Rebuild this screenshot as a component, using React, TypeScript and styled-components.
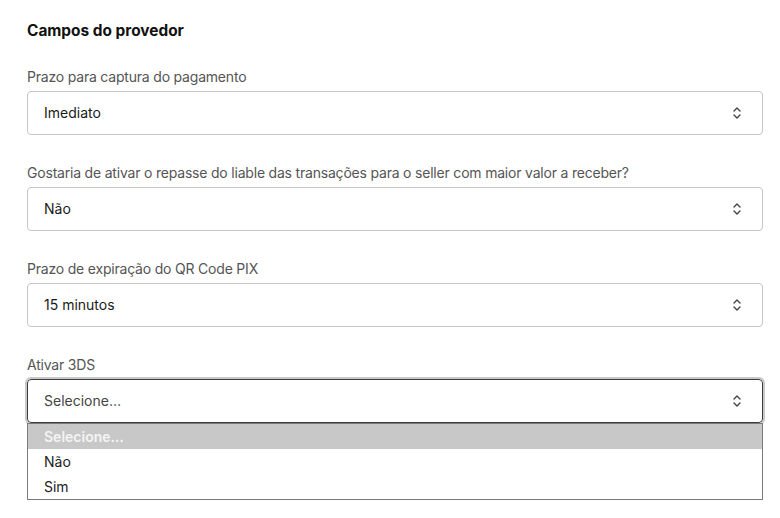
import React from "react";
import styled, { createGlobalStyle } from "styled-components";

const Global = createGlobalStyle`
  html, body { margin: 0; padding: 0; background: #fff; }
  body { font-family: Inter, "Open Sans", "Liberation Sans", sans-serif; }
`;

const Page = styled.div`
  padding: 21px 17px 0 27px;
  display: flex;
  flex-direction: column;
`;

const Heading = styled.h2`
  margin: 0 0 26px;
  font-size: 15.4px;
  line-height: 20px;
  font-weight: 700;
  color: #111;
`;

const Groups = styled.div`
  display: flex;
  flex-direction: column;
  gap: 28px;
`;

const Field = styled.div`
  display: flex;
  flex-direction: column;
  gap: 4px;
`;

const Label = styled.div`
  font-size: 14px;
  line-height: 20px;
  letter-spacing: -0.2px;
  color: #555;
`;

const SelectBox = styled.div<{ $focused?: boolean; $placeholder?: boolean }>`
  height: 44px;
  box-sizing: border-box;
  border: 1px solid ${(p) => (p.$focused ? "#3c3c3c" : "#c6c6c6")};
  border-radius: 4px;
  outline: ${(p) => (p.$focused ? "2px solid #c9c9c9" : "none")};
  display: flex;
  align-items: center;
  justify-content: space-between;
  padding: 0 20px 1px 16px;
  font-size: 14px;
  color: ${(p) => (p.$placeholder ? "#444" : "#1a1a1a")};
`;

const Chevron = () => (
  <svg width="10" height="14" viewBox="0 0 10 14" fill="none">
    <path d="M2 5 L5 2 L8 5" stroke="#444" strokeWidth="1.4" strokeLinecap="round" strokeLinejoin="round" />
    <path d="M2 9 L5 12 L8 9" stroke="#444" strokeWidth="1.4" strokeLinecap="round" strokeLinejoin="round" />
  </svg>
);

const Dropdown = styled.div`
  display: flex;
  flex-direction: column;
`;

const List = styled.div`
  border: 1px solid #7a7a7a;
  background: #fff;
  display: flex;
  flex-direction: column;
`;

const Option = styled.div<{ $active?: boolean }>`
  height: 25px;
  line-height: 25px;
  padding-left: 16px;
  font-size: 14px;
  background: ${(p) => (p.$active ? "#c8c8c8" : "transparent")};
  color: ${(p) => (p.$active ? "#f4f4f4" : "#222")};
  font-weight: ${(p) => (p.$active ? 600 : 400)};
`;

const fields = [
  { label: "Prazo para captura do pagamento", value: "Imediato" },
  {
    label:
      "Gostaria de ativar o repasse do liable das transações para o seller com maior valor a receber?",
    value: "Não",
  },
  { label: "Prazo de expiração do QR Code PIX", value: "15 minutos" },
];

export default function App() {
  return (
    <>
      <Global />
      <Page>
        <Heading>Campos do provedor</Heading>
        <Groups>
          {fields.map((f) => (
            <Field key={f.label}>
              <Label>{f.label}</Label>
              <SelectBox>
                <span>{f.value}</span>
                <Chevron />
              </SelectBox>
            </Field>
          ))}
          <Field>
            <Label>Ativar 3DS</Label>
            <Dropdown>
              <SelectBox $focused $placeholder>
                <span>Selecione…</span>
                <Chevron />
              </SelectBox>
              <List>
                <Option $active>Selecione…</Option>
                <Option>Não</Option>
                <Option>Sim</Option>
              </List>
            </Dropdown>
          </Field>
        </Groups>
      </Page>
    </>
  );
}
